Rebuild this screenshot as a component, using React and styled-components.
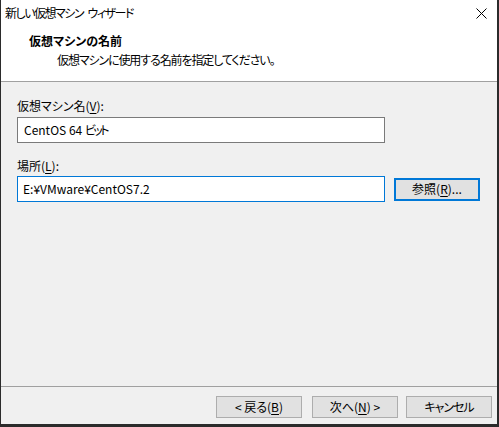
import React from 'react'
import styled, { createGlobalStyle } from 'styled-components'

const GlobalStyle = createGlobalStyle`
  html, body {
    margin: 0;
    padding: 0;
    background: #ffffff;
  }
  * {
    box-sizing: border-box;
  }
`

const Window = styled.div`
  width: 499px;
  height: 427px;
  display: flex;
  flex-direction: column;
  background: #f0f0f0;
  border-left: 1px solid #2b2b2b;
  border-right: 2px solid #2b2b2b;
  border-bottom: 3px solid #2b2b2b;
  font-family: "Noto Sans CJK JP", "Noto Sans", sans-serif;
  font-feature-settings: "palt";
  font-size: 12px;
  color: #000;
`

const TitleBar = styled.div`
  height: 26px;
  display: flex;
  align-items: center;
  justify-content: space-between;
  padding: 0 10px 0 4px;
  background: #ffffff;
`

const TitleText = styled.span`
  line-height: 16px;
  letter-spacing: -1.5px;
  white-space: pre;
`

const CloseIcon = styled.svg`
  width: 11px;
  height: 11px;
  display: block;
`

const Header = styled.div`
  height: 56px;
  padding: 7px 0 0 28px;
  background: #ffffff;
  border-bottom: 1px solid #a0a0a0;
`

const HeaderTitle = styled.div`
  font-weight: 700;
  line-height: 16px;
`

const HeaderSub = styled.div`
  margin: 3px 0 0 28px;
  line-height: 16px;
  letter-spacing: -1.1px;
`

const Body = styled.div`
  flex: 1;
  padding: 16px 0 0 16px;
  display: flex;
  flex-direction: column;
`

const Label = styled.div`
  line-height: 16px;
  margin-top: ${props => props.gap}px;
`

const Row = styled.div`
  display: flex;
  align-items: center;
  gap: 9px;
  margin-top: ${props => props.gap}px;
`

const TextBox = styled.div`
  width: 368px;
  height: 26px;
  display: flex;
  align-items: center;
  padding-left: ${props => props.focused ? 5 : 6}px;
  background: #ffffff;
  border: 1px solid ${props => props.focused ? '#0078d7' : '#7a7a7a'};
  line-height: 16px;
  white-space: pre;
`

const Narrow = styled.span`
  letter-spacing: ${props => props.spacing}px;
`

const Button = styled.div`
  width: 86px;
  height: ${props => props.tall ? 23 : 22}px;
  display: flex;
  align-items: center;
  justify-content: center;
  background: #e1e1e1;
  border: ${props => props.primary ? '2px solid #0078d7' : '1px solid #adadad'};
  line-height: 16px;
  white-space: pre;
`

const Footer = styled.div`
  height: 38px;
  border-top: 1px solid #a0a0a0;
  display: flex;
  justify-content: flex-end;
  gap: ${props => props.gap}px;
  padding: 9px 5px 0 0;
`

const ButtonGroup = styled.div`
  display: flex;
  gap: 8px;
`

const Key = styled.span`
  text-decoration: underline;
  text-underline-offset: 2px;
`

export default function App() {
  return (
    <>
      <GlobalStyle />
      <Window>
        <TitleBar>
          <TitleText>新しい仮想マシン{'\u2002'}ウィザード</TitleText>
          <CloseIcon viewBox="0 0 11 11">
            <path d="M0.5 0.5 L10.5 10.5 M10.5 0.5 L0.5 10.5" stroke="#000" strokeWidth="1" fill="none" />
          </CloseIcon>
        </TitleBar>
        <Header>
          <HeaderTitle>仮想マシンの名前</HeaderTitle>
          <HeaderSub>仮想マシンに使用する名前を指定してください。</HeaderSub>
        </Header>
        <Body>
          <Label gap={0}>仮想マシン名(<Key>V</Key>):</Label>
          <Row gap={3}>
            <TextBox>CentOS 64 <Narrow spacing={-2.5}>ビット</Narrow></TextBox>
          </Row>
          <Label gap={15}>場所(<Key>L</Key>):</Label>
          <Row gap={2}>
            <TextBox focused>E:¥VMware¥CentOS7.2</TextBox>
            <Button primary tall>参照(<Key>R</Key>)...</Button>
          </Row>
        </Body>
        <Footer gap={10}>
          <Button>&lt; 戻る(<Key>B</Key>)</Button>
          <ButtonGroup>
            <Button>次へ(<Key>N</Key>) &gt;</Button>
            <Button><Narrow spacing={-1}>キャンセル</Narrow></Button>
          </ButtonGroup>
        </Footer>
      </Window>
    </>
  )
}
